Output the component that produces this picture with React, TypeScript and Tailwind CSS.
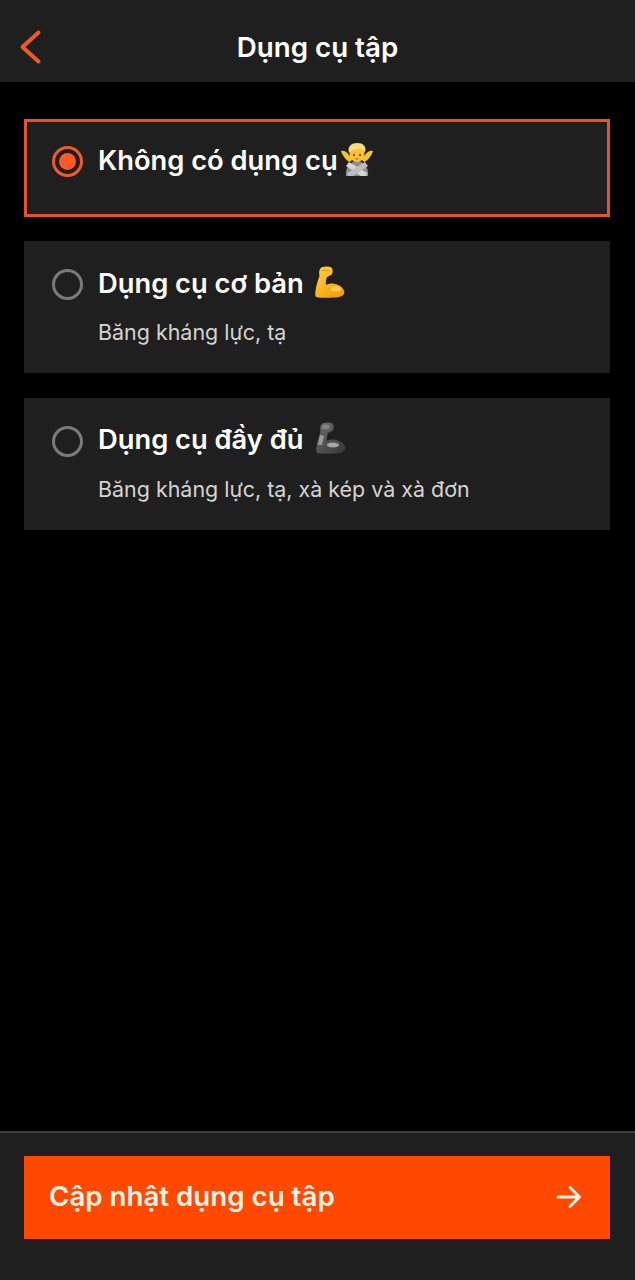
import * as React from 'react';

function NoGoodEmoji() {
  return (
    <svg width="32" height="33" viewBox="0 0 32 33" className="block ml-[3px] -mt-[2px]">
      <path d="M0 8 C3 7 6 9 8 12 L12 16 L9 19 C6 18 2 14 0 8 Z" fill="#fbc02d" />
      <path d="M32 8 C29 7 26 9 24 12 L20 16 L23 19 C26 18 30 14 32 8 Z" fill="#fbc02d" />
      <path d="M5 33 C4 25 9 18 16 18 C23 18 28 25 27 33 Z" fill="#8f8f94" />
      <path d="M8 19 L26 30 L25 33 L20 33 L5 23 Z" fill="#d6d6da" />
      <path d="M24 19 L6 30 L7 33 L12 33 L27 23 Z" fill="#bdbdc2" />
      <ellipse cx="16" cy="11" rx="7.5" ry="8" fill="#fcc22d" />
      <path d="M8 10 C6 3 11 0 16 0 C22 0 26 3 24 10 C23 7 21 6 18 6 C14 6 10 7 8 10 Z" fill="#f7dc7a" />
      <circle cx="13" cy="12" r="1" fill="#4a2f14" />
      <circle cx="19" cy="12" r="1" fill="#4a2f14" />
      <path d="M14.5 16 H17.5" stroke="#a8641c" strokeWidth="1" />
    </svg>
  );
}

function Bicep({ dark }: { dark?: boolean }) {
  const id = dark ? 'bicep-dark' : 'bicep-gold';
  return (
    <svg width="30" height="32" viewBox="0 0 30 32" className="block -mt-[3px]">
      <defs>
        <linearGradient id={id} x1="0" y1="0" x2="0.8" y2="1">
          <stop offset="0" stopColor={dark ? '#6e6e6e' : '#ffd23f'} />
          <stop offset="1" stopColor={dark ? '#3c3c3c' : '#f59e0b'} />
        </linearGradient>
      </defs>
      <path
        d="M5 3 C7 0 14 0 17 2 C18 4 18 8 16 9 L12 11 C11 14 10.5 16 11 19 C14 17 19 17 23 19 C28 21 30 25 29 28 C27 31 22 31.5 18 31.5 C12 32 5 32 1 31 C0 30 0 27 0.5 25 C1 20 3 14 4.5 10 C4 7 4 5 5 3 Z"
        fill={`url(#${id})`}
      />
      {dark ? (
        <>
          <path d="M4 13 L8 14 L6 23 L2 23 Z" fill="#b5b5b5" opacity="0.7" />
          <ellipse cx="17" cy="23" rx="6" ry="2.5" fill="#bdbdbd" opacity="0.8" />
          <ellipse cx="10" cy="5" rx="4" ry="2.5" fill="#929292" opacity="0.7" />
        </>
      ) : (
        <>
          <ellipse cx="21" cy="23" rx="5" ry="2.5" fill="#ffe27a" opacity="0.6" />
          <path d="M7 5 C9 4 12 4 14 5" stroke="#e08e0b" strokeWidth="1" fill="none" />
        </>
      )}
    </svg>
  );
}

function Radio({ checked }: { checked?: boolean }) {
  return (
    <div
      className={`w-[31px] h-[31px] shrink-0 rounded-full border-[3px] flex items-center justify-center ${
        checked ? 'border-[#f05a28]' : 'border-[#7a7a7a]'
      }`}
    >
      {checked && <div className="w-[17px] h-[17px] rounded-full bg-[#ff5a26]" />}
    </div>
  );
}

export default function App() {
  return (
    <div className="w-[635px] h-[1280px] flex flex-col bg-black text-white font-['Inter',sans-serif] overflow-hidden">
      <div className="h-[82px] shrink-0 bg-[#1f1f1f] relative flex justify-center pt-[31px]">
        <svg width="24" height="36" viewBox="0 0 24 36" fill="none" className="absolute left-[18px] top-[29px]">
          <path d="M20.5 3.5 L4.5 18 L20.5 32.5" stroke="#f05a28" strokeWidth="4" strokeLinecap="round" strokeLinejoin="round" />
        </svg>
        <div className="text-[27.7px] font-semibold leading-[32px]">Dụng cụ tập</div>
      </div>

      <div className="flex-1 pl-[24px] pr-[25px] pt-[37px] flex flex-col gap-[25px]">
        <div className="h-[98px] -mb-[1px] bg-[#1f1f1f] border-[3px] border-[#e8522a] pl-[25px] pt-[24px] flex items-start gap-[15px]">
          <Radio checked />
          <div className="flex items-center h-[29px]">
            <span className="text-[27.3px] font-semibold leading-[29px]">Không có dụng cụ</span>
            <NoGoodEmoji />
          </div>
        </div>

        <div className="h-[132px] bg-[#1f1f1f] pl-[28px] pt-[28px] flex items-start gap-[15px]">
          <Radio />
          <div className="pt-[1px]">
            <div className="flex items-center gap-[11px] h-[27px]">
              <span className="text-[27.3px] font-semibold leading-[27px]">Dụng cụ cơ bản</span>
              <Bicep />
            </div>
            <div className="text-[21.45px] leading-[28px] mt-[21px] text-[#d4d4d4]">Băng kháng lực, tạ</div>
          </div>
        </div>

        <div className="h-[132px] bg-[#1f1f1f] pl-[28px] pt-[28px] flex items-start gap-[15px]">
          <Radio />
          <div>
            <div className="flex items-center gap-[12px] h-[27px]">
              <span className="text-[27.3px] font-semibold leading-[27px]">Dụng cụ đầy đủ</span>
              <Bicep dark />
            </div>
            <div className="text-[21.45px] leading-[28px] mt-[22px] text-[#d4d4d4]">Băng kháng lực, tạ, xà kép và xà đơn</div>
          </div>
        </div>
      </div>

      <div className="h-[149px] shrink-0 bg-[#1f1f1f] border-t-2 border-[#3d3d3d] pl-[24px] pr-[25px] pt-[23px]">
        <div className="h-[83px] bg-[#ff4800] flex items-center justify-between pl-[25px] pr-[28px]">
          <span className="text-[27.7px] font-semibold leading-[32px] -mt-[3px] text-[#fff3ea]">Cập nhật dụng cụ tập</span>
          <svg width="26" height="26" viewBox="0 0 26 26" fill="none" className="-mt-[2px]">
            <path d="M2 13 H23 M14 3.5 L23.5 13 L14 22.5" stroke="#fff3ea" strokeWidth="3" strokeLinecap="round" strokeLinejoin="round" />
          </svg>
        </div>
      </div>
    </div>
  );
}
